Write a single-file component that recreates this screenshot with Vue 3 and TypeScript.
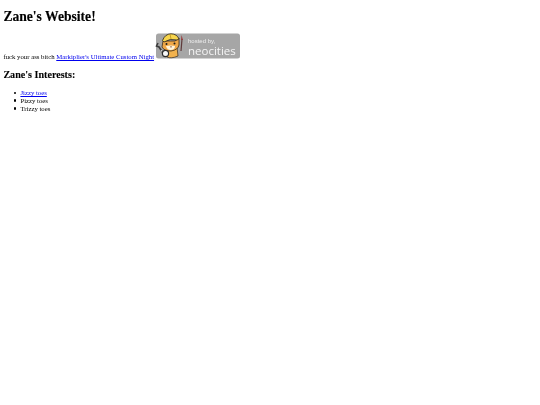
<script setup lang="ts">
const interests = [
  { label: 'Jizzy toes', link: true },
  { label: 'Pizzy toes', link: false },
  { label: 'Trizzy toes', link: false },
]
</script>

<template>
  <main class="page">
    <h1>Zane's Website!</h1>
    <p class="line">
      fuck your ass bitch
      <a href="#">Markiplier's Ultimate Custom Night</a>
      <svg class="badge" viewBox="0 0 85 26" width="85" height="26" aria-label="hosted by neocities">
        <rect x="1" y="0.5" width="84" height="25" rx="2.5" fill="#a6a6a6" />
        <path d="M3 10 L1.5 13 L4 14 L6 17 L8 20" fill="none" stroke="#3c3c3c" stroke-width="1.6" />
        <path d="M6 17 L8 20" stroke="#e8e8e8" stroke-width="1" />
        <path d="M11 15 L22 14 L23 23 Q16 26 12 24Z" fill="#f1b24e" stroke="#3a2c1c" stroke-width="0.7" />
        <path d="M8 8 L7 14 Q9 18 16 18 Q23 17 24 12 L24 5 L20 8 L12 8Z" fill="#f0a848" stroke="#3a2c1c" stroke-width="0.8" />
        <path d="M11 13 Q16 12 20 13 Q20 17 15.5 17 Q12 17 11 13Z" fill="#fff4dc" />
        <circle cx="11.5" cy="11" r="1" fill="#1d1d1d" />
        <circle cx="19.5" cy="10.5" r="1" fill="#1d1d1d" />
        <path d="M15 13.6 L17 13.6 L16 14.8Z" fill="#5a2d1e" />
        <path d="M7.5 7.5 Q10 1 16 0.8 Q22 1 24 6 L22 7 Q15 5 9 9Z" fill="#f6d44c" stroke="#2c2418" stroke-width="0.8" />
        <path d="M15 1 L16 6" stroke="#b98f20" stroke-width="0.8" />
        <circle cx="10.5" cy="20.5" r="3.1" fill="#f7f7f7" stroke="#2c2c2c" stroke-width="1.2" />
        <path d="M26 18 L27 6" stroke="#5e3a3a" stroke-width="1.2" />
        <path d="M26 7 L26.5 2 L28 7Z" fill="#9a3b3b" />
        <text x="33" y="9.8" class="small">hosted by,</text>
        <text x="33" y="22" class="big">neocities</text>
      </svg>
    </p>
    <h2>Zane's Interests:</h2>
    <ul>
      <li v-for="item in interests" :key="item.label">
        <a v-if="item.link" href="#">{{ item.label }}</a>
        <template v-else>{{ item.label }}</template>
      </li>
    </ul>
  </main>
</template>

<style scoped>
.page {
  padding: 8.6px 3.4px 0;
  font-family: "Liberation Serif", serif;
  font-size: 6.75px;
  line-height: 7.7px;
  color: #000;
  filter: blur(0.2px);
}
h1 {
  font-size: 13.6px;
  line-height: 15.5px;
  margin: 0 0 9px;
  -webkit-text-stroke: 0.15px #000;
}
.line {
  margin: 0;
}
a {
  color: #0000ee;
}
.badge {
  vertical-align: baseline;
  margin-left: 0.7px;
}
.small {
  font-family: "Liberation Sans", sans-serif;
  font-size: 6px;
  fill: #eee;
}
.big {
  font-family: "Open Sans", sans-serif;
  font-size: 11.5px;
  fill: #f4f4f4;
}
h2 {
  font-size: 10.1px;
  line-height: 11.6px;
  margin: 8.4px 0 8.4px;
  -webkit-text-stroke: 0.1px #000;
}
ul {
  margin: 0;
  padding-left: 17px;
  list-style: none;
}
li::before {
  content: "";
  display: inline-block;
  width: 2.4px;
  height: 2.4px;
  margin-left: -6.4px;
  margin-right: 4px;
  border-radius: 50%;
  background: #000;
  vertical-align: 1px;
}
</style>
